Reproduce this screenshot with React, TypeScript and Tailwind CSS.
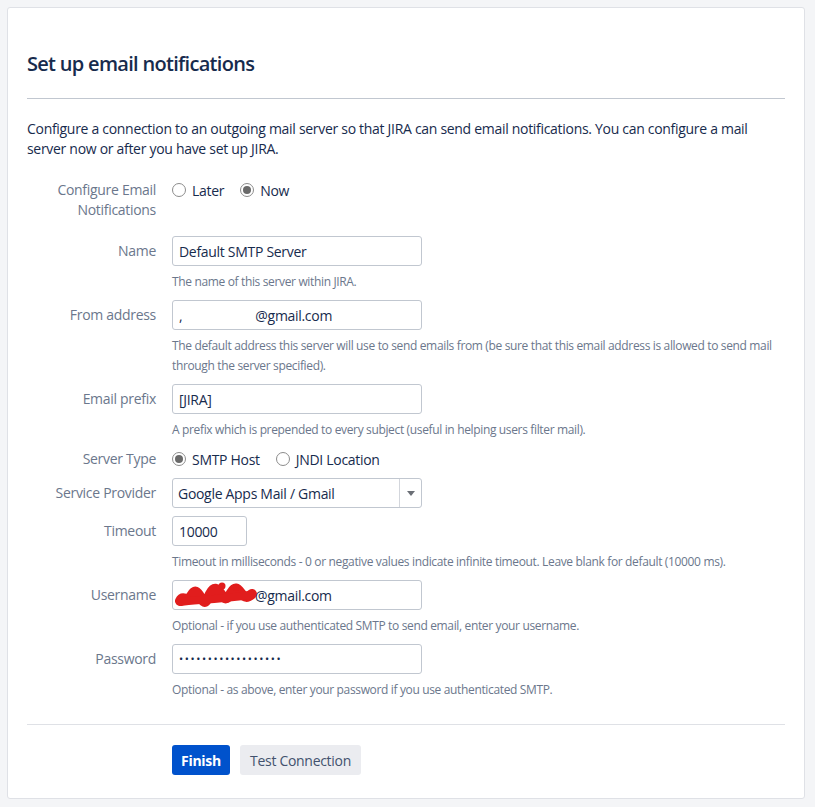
import type { ReactNode } from "react";

const font = { fontFamily: '"Segoe UI", "Open Sans", "Noto Sans", sans-serif' };

function Radio({ checked, label }: { checked?: boolean; label: string }) {
  return (
    <span className="flex items-center gap-[6px]">
      <span className="flex h-[14px] w-[14px] items-center justify-center rounded-full border border-[#8c8c8c] bg-white">
        {checked && <span className="h-[8px] w-[8px] rounded-full bg-[#6a6a6a]" />}
      </span>
      <span className="text-[14px] tracking-[-0.3px] text-[#172b4d]">{label}</span>
    </span>
  );
}

function Field({ label, children, help }: { label: ReactNode; children: ReactNode; help?: ReactNode }) {
  return (
    <div className="flex gap-4">
      <div className="w-[129px] shrink-0 pt-[5px] text-right text-[14px] leading-5 tracking-[-0.3px] text-[#6b778c]">{label}</div>
      <div className="min-w-0 flex-1">
        {children}
        {help && <p className="mt-[6px] text-[12px] leading-5 tracking-[-0.35px] text-[#6b778c]">{help}</p>}
      </div>
    </div>
  );
}

function TextBox({ children, width = "w-[250px]" }: { children: ReactNode; width?: string }) {
  return (
    <div
      className={`${width} flex h-[30px] items-center rounded-[3px] border border-[#c1c7d0] bg-white px-[6px] text-[14px] tracking-[-0.3px] text-[#172b4d]`}
    >
      {children}
    </div>
  );
}

// red marker scribble hiding the account name
function Scribble() {
  return (
    <svg width="84" height="28" viewBox="0 0 84 28" className="-ml-[5px] shrink-0">
      <path
        d="M6 20 C 9 13, 13 22, 17 15 S 23 10, 27 17 S 32 21, 36 13 S 43 7, 47 13 S 53 19, 57 12 S 63 7, 67 12 S 73 17, 78 13"
        fill="none"
        stroke="#e11d1d"
        strokeWidth="10"
        strokeLinecap="round"
        strokeLinejoin="round"
      />
      <path d="M7 21 C 20 19, 40 19, 76 14" fill="none" stroke="#e11d1d" strokeWidth="8" strokeLinecap="round" />
      <circle cx="48" cy="5" r="3.5" fill="#e11d1d" />
      <circle cx="62" cy="7" r="3" fill="#e11d1d" />
    </svg>
  );
}

export default function App() {
  return (
    <div className="min-h-[807px] bg-[#f4f5f7] pt-[7px] pl-[7px]" style={font}>
      <div className="w-[798px] rounded-[3px] border border-[#dfe1e6] bg-white px-[19px] pt-[42px] pb-[23px]">
        <h1 className="text-[20px] font-semibold leading-7 tracking-[-0.7px] text-[#172b4d]">Set up email notifications</h1>
        <hr className="mt-[20px] border-[#c1c7d0]" />
        <p className="mt-[20px] text-[14px] leading-5 tracking-[-0.3px] text-[#172b4d]">
          Configure a connection to an outgoing mail server so that JIRA can send email notifications. You can configure a mail
          server now or after you have set up JIRA.
        </p>

        <div className="mt-[21px] flex flex-col gap-2">
          <div className="flex gap-4">
            <div className="w-[129px] shrink-0 text-right text-[14px] leading-5 tracking-[-0.3px] text-[#6b778c]">
              Configure Email Notifications
            </div>
            <div className="flex h-5 items-center gap-[16px]">
              <Radio label="Later" />
              <Radio checked label="Now" />
            </div>
          </div>

          <div className="mt-2">
            <Field label="Name" help="The name of this server within JIRA.">
              <TextBox>Default SMTP Server</TextBox>
            </Field>
          </div>

          <Field
            label="From address"
            help="The default address this server will use to send emails from (be sure that this email address is allowed to send mail through the server specified)."
          >
            <TextBox>
              <span>,</span>
              <span className="ml-[73px]">@gmail.com</span>
            </TextBox>
          </Field>

          <Field label="Email prefix" help="A prefix which is prepended to every subject (useful in helping users filter mail).">
            <TextBox>[JIRA]</TextBox>
          </Field>

          <div className="flex h-[22px] items-center gap-4">
            <div className="w-[129px] shrink-0 text-right text-[14px] leading-5 tracking-[-0.3px] text-[#6b778c]">Server Type</div>
            <div className="flex items-center gap-[16px]">
              <Radio checked label="SMTP Host" />
              <Radio label="JNDI Location" />
            </div>
          </div>

          <Field label="Service Provider">
            <div className="flex h-[30px] w-[250px] items-stretch rounded-[3px] border border-[#c1c7d0] bg-white text-[14px] tracking-[-0.3px] text-[#172b4d]">
              <div className="flex flex-1 items-center px-[5px]">Google Apps Mail / Gmail</div>
              <div className="flex w-[22px] items-center justify-center border-l border-[#d3d6dc]">
                <svg width="8" height="5" viewBox="0 0 8 5">
                  <path d="M0 0 H8 L4 5 Z" fill="#6b6f76" />
                </svg>
              </div>
            </div>
          </Field>

          <Field label="Timeout" help="Timeout in milliseconds - 0 or negative values indicate infinite timeout. Leave blank for default (10000 ms).">
            <TextBox width="w-[75px]">10000</TextBox>
          </Field>

          <Field label="Username" help="Optional - if you use authenticated SMTP to send email, enter your username.">
            <TextBox>
              <Scribble />
              <span className="-ml-[3px]">@gmail.com</span>
            </TextBox>
          </Field>

          <Field label="Password" help="Optional - as above, enter your password if you use authenticated SMTP.">
            <TextBox>
              <span className="text-[11px] tracking-[1.6px]">••••••••••••••••••</span>
            </TextBox>
          </Field>
        </div>

        <hr className="mt-[24px] border-[#dfe1e6]" />

        <div className="mt-[20px] flex gap-[10px] pl-[145px]">
          <button className="h-[30px] w-[58px] rounded-[3px] bg-[#0052cc] text-[14px] font-bold tracking-[-0.3px] text-white">Finish</button>
          <button className="h-[30px] w-[121px] rounded-[3px] bg-[#ebecf0] text-[14px] tracking-[-0.3px] text-[#42526e]">
            Test Connection
          </button>
        </div>
      </div>
    </div>
  );
}
